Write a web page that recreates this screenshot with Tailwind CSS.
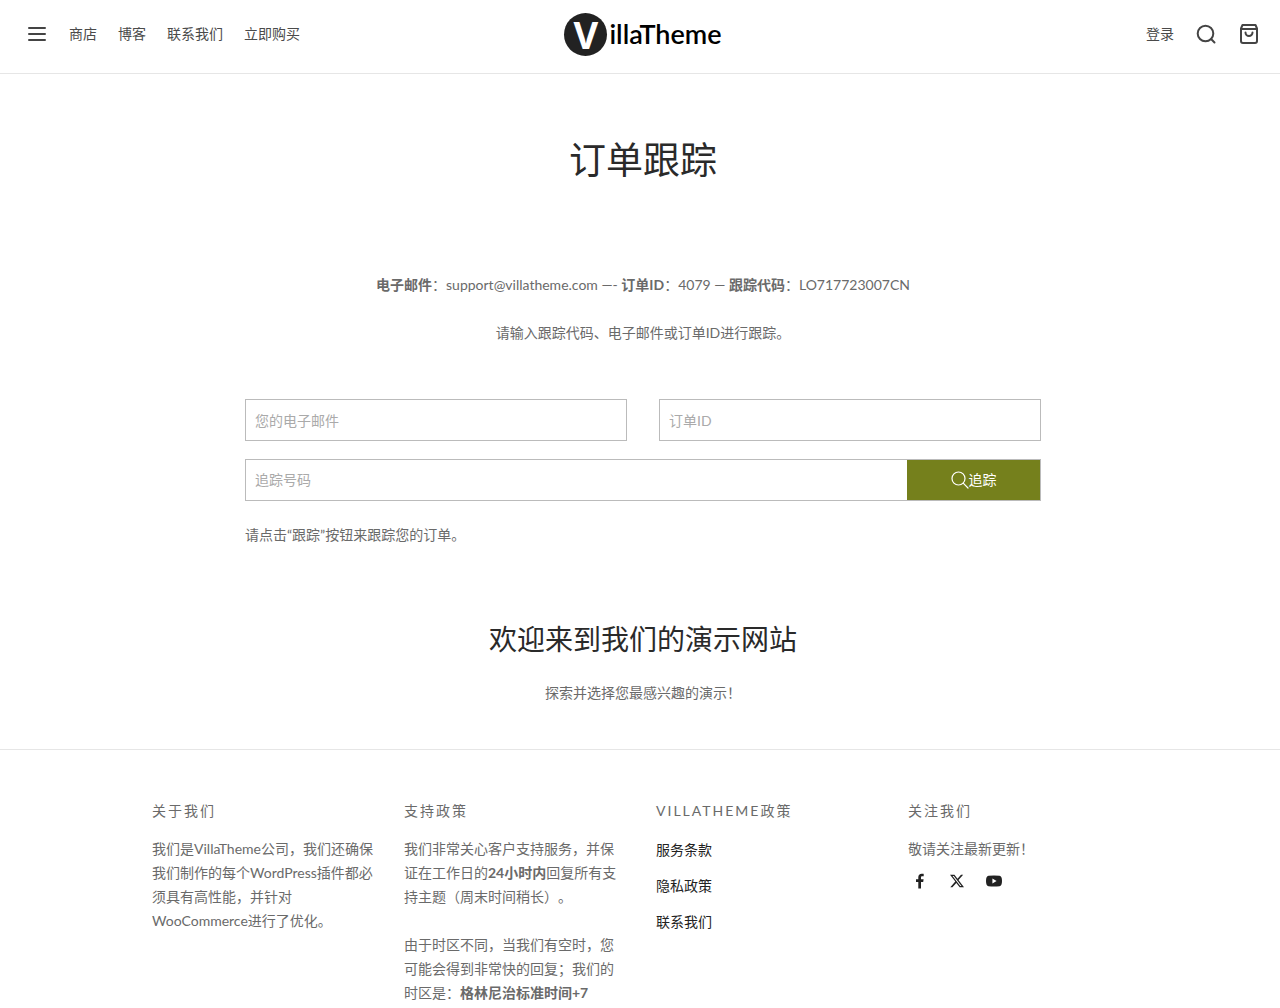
<!DOCTYPE html>
<html lang="zh-CN">
<head>
<meta charset="utf-8">
<meta name="viewport" content="width=device-width, initial-scale=1">
<title>订单跟踪 – VillaTheme</title>
<script src="https://cdn.jsdelivr.net/npm/@tailwindcss/browser@4"></script>
</head>
<body class="bg-white font-['Lato','Noto_Sans_CJK_SC',sans-serif] text-sm leading-6 text-[#6a6a6a] [text-spacing-trim:space-all]">
<header class="grid h-[74px] grid-cols-[1fr_auto_1fr] items-center border-b border-[#e6e6e6] pr-5 pb-[5px] pl-[26px] text-[#4a4a4a]">
  <nav class="flex items-center gap-[21px]">
    <button type="button" aria-label="菜单">
      <svg class="h-[22px] w-[22px]" viewBox="0 0 22 22" fill="none" stroke="#444" stroke-width="2" stroke-linecap="round"><path d="M3 5h16M3 11h16M3 17h16"/></svg>
    </button>
    <a href="#">商店</a>
    <a href="#">博客</a>
    <a href="#">联系我们</a>
    <a href="#">立即购买</a>
  </nav>
  <a href="#" class="flex items-center gap-[2px] text-black" aria-label="VillaTheme">
    <span class="flex h-[43px] w-[43px] items-center justify-center rounded-full bg-[#222] font-['Open_Sans',sans-serif] text-[38px] leading-[43px] font-bold text-white">V</span>
    <span class="text-[27px] leading-8 font-semibold">illaTheme</span>
  </a>
  <div class="flex items-center justify-end gap-5">
    <a href="#">登录</a>
    <button type="button" aria-label="搜索">
      <svg class="h-6 w-6" viewBox="0 0 24 24" fill="none" stroke="#444" stroke-width="2" stroke-linecap="round"><circle cx="11.5" cy="11.5" r="7.8"/><path d="M17.3 17.3l3.2 3.2"/></svg>
    </button>
    <a href="#" aria-label="购物车">
      <svg class="h-[22px] w-[22px]" viewBox="0 0 22 22" fill="none" stroke="#444" stroke-width="2" stroke-linecap="round" stroke-linejoin="round"><path d="M3 5.500 4.500 2h13L19 5.500V18a2 2 0 0 1-2 2H5a2 2 0 0 1-2-2zM3 6h16M7.500 9.500a3.500 3.500 0 0 0 7 0"/></svg>
    </a>
  </div>
</header>

<main class="pt-[58px] pb-11 pl-[6px] text-center">
  <h1 class="text-[37px] leading-[56px] text-[#2a2a2a]">订单跟踪</h1>
  <p class="mt-[85px]"><strong>电子邮件</strong>：support@villatheme.com —- <strong>订单ID</strong>：4079 — <strong>跟踪代码</strong>：LO717723007CN</p>
  <p class="mt-6">请输入跟踪代码、电子邮件或订单ID进行跟踪。</p>
  <form class="mx-auto mt-[54px] max-w-[796px] text-left">
    <div class="grid grid-cols-2 gap-8">
      <input type="email" aria-label="您的电子邮件" placeholder="您的电子邮件" class="h-[42px] w-full border border-[#bbb] px-[9px] placeholder:text-[#aaa]">
      <input type="text" aria-label="订单ID" placeholder="订单ID" class="h-[42px] w-full border border-[#bbb] px-[9px] placeholder:text-[#aaa]">
    </div>
    <div class="mt-[18px] flex h-[42px] border border-[#bbb]">
      <input type="text" aria-label="追踪号码" placeholder="追踪号码" class="min-w-0 flex-1 px-[9px] placeholder:text-[#aaa]">
      <button type="submit" class="flex w-[133px] items-center justify-center bg-[#75801c] text-white">
        <svg class="h-[18px] w-[18px]" viewBox="0 0 18 18" fill="none" stroke="#fff" stroke-width="1.200" stroke-linecap="round"><circle cx="7.500" cy="7.500" r="6.500"/><path d="M12.200 12.200 17 17"/></svg>追踪
      </button>
    </div>
    <p class="mt-[22px]">请点击“跟踪”按钮来跟踪您的订单。</p>
  </form>
  <h2 class="mt-[70px] text-[28px] leading-[44px] text-[#2a2a2a]">欢迎来到我们的演示网站</h2>
  <p class="mt-5">探索并选择您最感兴趣的演示！</p>
</main>

<footer class="border-t border-[#e6e6e6] pt-[49px] pb-12 pl-[6px]">
  <div class="mx-auto grid max-w-[982px] grid-cols-4 gap-[26px]">
    <section>
      <h3 class="tracking-[2px]">关于我们</h3>
      <p class="mt-[14px] pr-1">我们是VillaTheme公司，我们还确保我们制作的每个WordPress插件都必须具有高性能，并针对WooCommerce进行了优化。</p>
    </section>
    <section>
      <h3 class="tracking-[2px]">支持政策</h3>
      <p class="mt-[14px] pr-1">我们非常关心客户支持服务，并保证在工作日的<strong>24小时内</strong>回复所有支持主题（周末时间稍长）。</p>
      <p class="mt-6 pr-1">由于时区不同，当我们有空时，您可能会得到非常快的回复；我们的时区是：<strong>格林尼治标准时间+7</strong></p>
    </section>
    <section>
      <h3 class="tracking-[2px]">VILLATHEME政策</h3>
      <ul class="mt-[15px] flex flex-col gap-3 text-[#222]">
        <li><a href="#">服务条款</a></li>
        <li><a href="#">隐私政策</a></li>
        <li><a href="#">联系我们</a></li>
      </ul>
    </section>
    <section>
      <h3 class="tracking-[2px]">关注我们</h3>
      <p class="mt-[14px]">敬请关注最新更新！</p>
      <div class="mt-3 flex items-center gap-[22px] pl-1 text-[#222]">
        <a href="#" aria-label="Facebook"><svg class="h-4 w-4" viewBox="0 0 16 16" fill="currentColor"><path d="M6.300 15.500V9H4V6.300h2.300V4.300C6.300 2 7.600.8 9.700.8c1 0 1.800.1 2 .1v2.400h-1.300c-1.100 0-1.400.5-1.400 1.300v1.700h2.600L11.200 9H9v6.500z"/></svg></a>
        <a href="#" aria-label="X"><svg class="h-[14px] w-[14px]" viewBox="0 0 24 24" fill="currentColor"><path d="M18.900 1.150h3.680l-8.040 9.190L24 22.850h-7.410l-5.800-7.590-6.640 7.590H.46l8.600-9.830L0 1.150h7.600l5.240 6.930zM17.610 20.640h2.040L6.490 3.240H4.300z"/></svg></a>
        <a href="#" aria-label="YouTube"><svg class="h-4 w-4" viewBox="0 0 16 16" fill="currentColor"><path fill-rule="evenodd" d="M2.500 2.800Q8 2 13.500 2.800 16 3 16 8t-2.500 5.200Q8 14 2.500 13.200 0 13 0 8t2.500-5.200zM6.400 5.600v4.800L10.600 8z"/></svg></a>
      </div>
    </section>
  </div>
</footer>
</body>
</html>
